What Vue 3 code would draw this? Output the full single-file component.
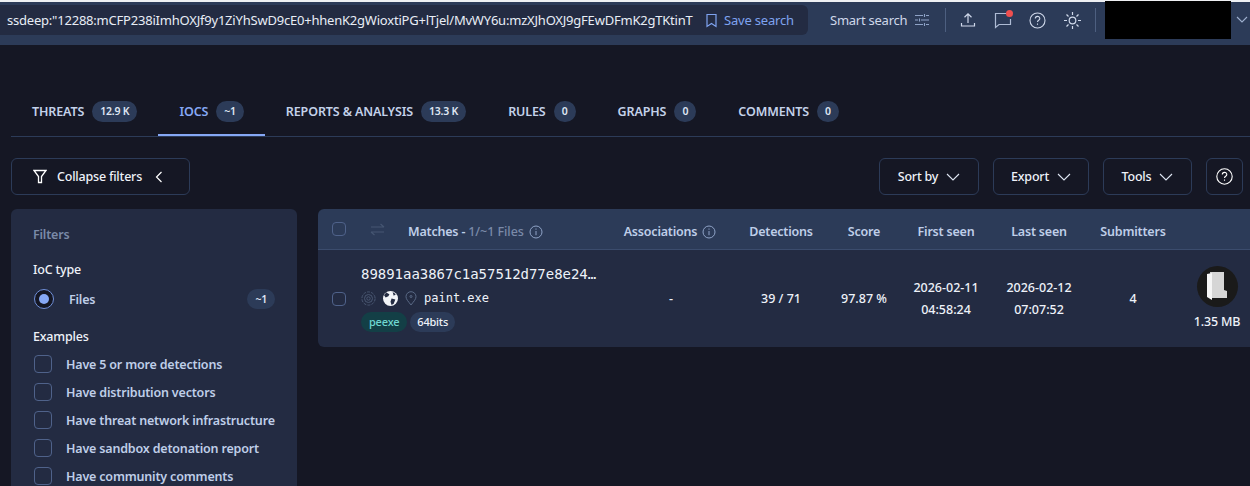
<script setup>
const tabs = [
  { label: 'THREATS', count: '12.9 K' },
  { label: 'IOCS', count: '~1', active: true },
  { label: 'REPORTS & ANALYSIS', count: '13.3 K' },
  { label: 'RULES', count: '0' },
  { label: 'GRAPHS', count: '0' },
  { label: 'COMMENTS', count: '0' },
]
const examples = [
  'Have 5 or more detections',
  'Have distribution vectors',
  'Have threat network infrastructure',
  'Have sandbox detonation report',
  'Have community comments',
]
const actions = ['Sort by', 'Export', 'Tools']
const columns = ['Detections', 'Score', 'First seen', 'Last seen', 'Submitters']
</script>

<template>
  <div class="page">
    <header class="topbar">
      <div class="search">
        <span class="query">ssdeep:"12288:mCFP238iImhOXJf9y1ZiYhSwD9cE0+hhenK2gWioxtiPG+lTjel/MvWY6u:mzXJhOXJ9gFEwDFmK2gTKtinT</span>
        <span class="save">
          <svg width="13" height="15" viewBox="0 0 13 15" fill="none" stroke="currentColor" stroke-width="1.2"><path d="M2 1.5h9v12l-4.5-3-4.5 3z"/></svg>
          Save search
        </span>
      </div>
      <span class="smart">Smart search
        <svg width="14" height="14" viewBox="0 0 14 14" stroke="#8fa3c7" stroke-width="1.1" fill="none"><path d="M0 2.5h8M11 2.5h3M9.5 1v3M0 7h3M6 7h8M4.500 5.500v3M0 11.500h8M11 11.500h3M9.500 10v3"/></svg>
      </span>
      <i class="sep first"></i>
      <svg class="upload" width="16" height="16" viewBox="0 0 16 16" fill="none" stroke="#cfd8ea" stroke-width="1.2"><path d="M8 11V2M4.500 5.200 8 1.800l3.500 3.400M1.500 11v3h13v-3"/></svg>
      <span class="chat">
        <svg width="19" height="18" viewBox="0 0 19 18" fill="none" stroke="#aebbd4" stroke-width="1.2"><path d="M12 2.500H1.500v14l3.500-3h11.500V8"/></svg>
        <b class="dot"></b>
      </span>
      <svg class="help-ic" width="17" height="17" viewBox="0 0 17 17" fill="none" stroke="#cfd8ea" stroke-width="1.1"><circle cx="8.500" cy="8.500" r="7.500"/><path d="M6.300 6.600c0-3 4.500-3 4.500-.1 0 1.800-2.300 1.800-2.300 3.600"/><path d="M8.500 11.500v1.300"/></svg>
      <svg class="sun" width="19" height="19" viewBox="0 0 19 19" fill="none" stroke="#cfd8ea" stroke-width="1.2"><circle cx="9.500" cy="9.500" r="3.300"/><path d="M9.500 1v3M9.500 15v3M1 9.500h3M15 9.500h3M3.500 3.500l2 2M13.500 13.500l2 2M3.500 15.500l2-2M13.500 5.500l2-2"/></svg>
      <i class="sep"></i>
      <div class="blackout"></div>
      <svg class="caret" width="12" height="8" viewBox="0 0 12 8" fill="none" stroke="#9fb0cf" stroke-width="1.100"><path d="m1 1 5 5 5-5"/></svg>
    </header>

    <nav class="tabs">
      <div v-for="t in tabs" :key="t.label" class="tab" :class="{ active: t.active }">
        <span>{{ t.label }}</span>
        <span class="count">{{ t.count }}</span>
      </div>
    </nav>

    <div class="toolbar">
      <button class="btn collapse">
        <svg width="14" height="15" viewBox="0 0 14 15" fill="none" stroke="#fff" stroke-width="1.300"><path d="M1 1.500h12L8.500 7.500v6h-3v-6z"/></svg>
        <span>Collapse filters</span>
        <svg class="chev" width="8" height="12" viewBox="0 0 8 12" fill="none" stroke="#fff" stroke-width="1.200"><path d="M6.500 1 1.500 6l5 5"/></svg>
      </button>
      <div class="actions">
        <button v-for="a in actions" :key="a" class="btn action">
          <span>{{ a }}</span>
          <svg width="14" height="8" viewBox="0 0 14 8" fill="none" stroke="#dfe6f3" stroke-width="1.100"><path d="m1 1 6 6 6-6"/></svg>
        </button>
        <button class="btn help">
          <svg width="17" height="17" viewBox="0 0 17 17" fill="none" stroke="#fff" stroke-width="1.100"><circle cx="8.500" cy="8.500" r="7.700"/><path d="M6.300 6.600c0-3 4.500-3 4.500-.1 0 1.800-2.300 1.800-2.300 3.600M8.500 11.500v1.300"/></svg>
        </button>
      </div>
    </div>

    <div class="content">
      <aside class="filters">
        <div class="f-title">Filters</div>
        <div class="f-head">IoC type</div>
        <div class="radio-row">
          <span class="radio"><span></span></span>
          <span class="radio-label">Files</span>
          <span class="count small">~1</span>
        </div>
        <div class="f-head examples">Examples</div>
        <label v-for="e in examples" :key="e" class="check-row">
          <span class="box"></span>
          <span>{{ e }}</span>
        </label>
      </aside>

      <section class="table">
        <div class="row head">
          <div class="first-cell">
            <span class="box tbox"></span>
            <svg class="swap" width="15" height="13" viewBox="0 0 15 13" fill="none" stroke="#465672" stroke-width="1.100"><path d="M1 4h13M10.500 1 14 4M14 9H1M4.500 12 1 9"/></svg>
            <span class="matches"><b>Matches - </b><em>1/~1 Files</em>
              <svg width="14" height="14" viewBox="0 0 14 14" fill="none" stroke="#8fa3c7" stroke-width="1"><circle cx="7" cy="7" r="6"/><path d="M7 6v4.200M7 3.500v1.200"/></svg>
            </span>
          </div>
          <span class="cell assoc">Associations
            <svg width="14" height="14" viewBox="0 0 14 14" fill="none" stroke="#8fa3c7" stroke-width="1"><circle cx="7" cy="7" r="6"/><path d="M7 6v4.200M7 3.500v1.200"/></svg>
          </span>
          <span v-for="c in columns" :key="c" class="cell">{{ c }}</span>
        </div>
        <div class="row body">
          <div class="first-cell">
            <span class="box tbox"></span>
            <div class="file">
              <div class="hash">89891aa3867c1a57512d77e8e24…</div>
              <div class="name-line">
                <svg width="15" height="15" viewBox="0 0 15 15" fill="none" stroke="#4a5873" stroke-width="1"><circle cx="7.500" cy="7.500" r="1.700"/><circle cx="7.500" cy="7.500" r="4"/><circle cx="7.500" cy="7.500" r="6.600" stroke-dasharray="3 1.200"/></svg>
                <svg width="15" height="15" viewBox="0 0 14 14"><circle cx="7" cy="7" r="7" fill="#f2f4f8"/><path d="M3 1.500 6 3 5 5 2.500 6 1 4zM8 7l3.500 1L10 12 8 13 7 10zM9 1l3 2-2 1.500z" fill="#232b42"/></svg>
                <svg width="12" height="15" viewBox="0 0 12 15" fill="none" stroke="#5a6a86" stroke-width="1"><path d="M6 14C3.500 10.500 1 8.500 1 5.700a5 5 0 0 1 10 0C11 8.500 8.500 10.500 6 14z"/><circle cx="6" cy="5.500" r="1"/></svg>
                <span class="exe">paint.exe</span>
              </div>
              <div class="chips"><span class="chip green">peexe</span><span class="chip blue">64bits</span></div>
            </div>
          </div>
          <span class="cell">-</span>
          <span class="cell">39 / 71</span>
          <span class="cell">97.87 %</span>
          <span class="cell dates">2026-02-11<br>04:58:24</span>
          <span class="cell dates">2026-02-12<br>07:07:52</span>
          <span class="cell">4</span>
          <div class="size">
            <span class="avatar">
              <svg width="20" height="29" viewBox="0 0 20 29"><path d="M3 0h14v18l3 1v7H5z" fill="#d6d6d6"/><path d="M0 2l5-1v27l-5-3z" fill="#f6f6f6"/></svg>
            </span>
            <span class="size-text">1.35 MB</span>
          </div>
        </div>
      </section>
    </div>
  </div>
</template>

<style>
html, body { margin: 0; background: #151724; overflow: hidden; }
</style>

<style scoped>
.page {
  width: 1250px; height: 486px; overflow: hidden; background: #151724;
  font-family: "Noto Sans", "Open Sans", sans-serif; color: #dfe6f3; font-size: 13px;
}
svg { display: block; flex: none; }
.topbar {
  height: 45px; box-sizing: border-box; border-top: 2px solid #eef0f3; padding-bottom: 7px; background: #2c3b58;
  display: flex; align-items: center; color: #cfd8ea;
}
.search {
  width: 808px; height: 30px; flex: none; background: #232b42; border-radius: 0 6px 6px 0;
  display: flex; align-items: center; box-sizing: border-box; padding-left: 7px; overflow: hidden;
}
.query { width: 686px; flex: none; white-space: nowrap; color: #e8edf6; font-size: 13px; letter-spacing: -0.21px; }
.save { display: flex; align-items: center; gap: 6px; margin-left: 12px; color: #7fa3f0; letter-spacing: -0.2px; white-space: nowrap; }
.smart { margin-left: 22px; display: flex; align-items: center; gap: 8px; letter-spacing: -0.25px; white-space: nowrap; width: 115px; flex: none; }
.sep { width: 1px; height: 24px; background: #4d5f80; flex: none; }
.sep.first { margin-right: 14px; }
.upload { margin-right: 18px; }
.chat { position: relative; display: block; margin-right: 16px; }
.dot { position: absolute; top: -1px; right: 0; width: 7px; height: 7px; border-radius: 50%; background: #f04f4f; }
.help-ic { margin-right: 17px; }
.sun { margin-right: 13px; }
.blackout { width: 126px; height: 38px; background: #000; margin-left: 9px; flex: none; }
.caret { margin-left: 5px; }
.tabs {
  margin: 47px 0 0 11px; height: 45px; box-sizing: border-box; border-bottom: 1px solid #2c3b58;
  display: flex; align-items: flex-start; padding-top: 9px; width: 1239px;
}
.tab { height: 35px; box-sizing: border-box; padding: 0 21px; display: flex; align-items: flex-start; gap: 8px; position: relative; font-weight: 600; font-size: 12.5px; color: #c4d2ea; letter-spacing: -0.13px; line-height: 21px; white-space: nowrap; }
.tab.active { color: #86a8f5; }
.tab.active::after { content: ""; position: absolute; left: 0; right: 0; bottom: 0; height: 2px; background: #86a8f5; }
.count { background: #2c3b58; border-radius: 11px; height: 21px; line-height: 21px; padding: 0 8px; font-size: 10.5px; font-weight: 600; color: #dfe6f3; letter-spacing: -0.2px; min-width: 6px; text-align: center; }
.toolbar { margin: 21px 7px 0 11px; display: flex; justify-content: space-between; }
.btn { height: 37px; box-sizing: border-box; background: transparent; border: 1px solid #2c3b58; border-radius: 6px; display: flex; align-items: center; justify-content: center; color: #eef2f9; font: 500 12.5px "Noto Sans", sans-serif; letter-spacing: -0.2px; padding: 0; }
.collapse { width: 179px; gap: 10px; justify-content: flex-start; padding-left: 21px; }
.chev { margin-left: 3px; }
.actions { display: flex; gap: 14px; }
.action { gap: 8px; }
.action:nth-child(1) { width: 100px; }
.action:nth-child(2) { width: 96px; }
.action:nth-child(3) { width: 89px; }
.help { width: 37px; }
.content { display: flex; margin: 14px 0 0 11px; gap: 21px; }
.filters { width: 286px; height: 300px; flex: none; box-sizing: border-box; padding: 16px 22px; background: #232b42; border-radius: 6px 6px 0 0; }
.f-title { color: #7a8aa8; font-weight: 600; font-size: 12.5px; line-height: 20px; letter-spacing: -0.2px; }
.f-head { color: #eef2f9; font-weight: 500; font-size: 12.5px; line-height: 20px; margin-top: 15px; letter-spacing: -0.2px; }
.f-head.examples { margin-top: 16px; }
.radio-row { display: flex; align-items: center; height: 24px; margin-top: 7px; font-weight: 600; color: #bfcee8; }
.radio { width: 20px; height: 20px; margin-left: 1px; box-sizing: border-box; border: 1px solid #6f8fd8; border-radius: 50%; background: #151724; display: flex; align-items: center; justify-content: center; }
.radio span { width: 10px; height: 10px; border-radius: 50%; background: #86a8f5; }
.radio-label { margin-left: 15px; font-size: 12.5px; letter-spacing: -0.2px; }
.count.small { margin-left: auto; height: 20px; line-height: 20px; }
.check-row { display: flex; align-items: center; gap: 14px; height: 28px; font-weight: 600; font-size: 12.5px; color: #bfcee8; letter-spacing: -0.18px; white-space: nowrap; }
.check-row:first-of-type { margin-top: 3px; }
.box { width: 18px; height: 18px; box-sizing: border-box; flex: none; margin-left: 1px; border: 1px solid #4f628a; border-radius: 4px; display: block; }
.table { width: 950px; flex: none; }
.row { display: grid; grid-template-columns: 290px 126px 94px 72px 92px 94px 94px 72px 16px; align-items: center; }
.head { height: 41px; box-sizing: border-box; background: #2c3b58; border-radius: 6px 0 0 0; border-bottom: 1px solid #3b4c6d; font-weight: 600; font-size: 12.5px; color: #bfcee8; letter-spacing: -0.2px; white-space: nowrap; }
.body { height: 97px; background: #232b42; border-radius: 0 0 0 6px; color: #eef2f9; font-size: 12.5px; font-weight: 500; }
.first-cell { display: flex; align-items: center; padding-left: 14px; }
.body .first-cell { align-self: stretch; }
.tbox { width: 14px; height: 14px; margin: 0; }
.swap { margin-left: 24px; }
.matches { margin-left: 23px; padding-top: 5px; display: flex; align-items: center; gap: 5px; }
.matches b { font-weight: 600; }
.matches em { font-style: normal; font-weight: 500; color: #7a8aa8; margin-left: -2px; letter-spacing: -0.05px; }
.cell { text-align: center; white-space: nowrap; }
.head .cell { padding-top: 5px; }
.assoc { display: flex; align-items: center; justify-content: center; gap: 5px; margin-left: -2px; }
.dates { line-height: 22px; }
.file { margin-left: 15px; align-self: flex-start; padding-top: 16px; min-width: 0; }
.hash { font-family: "DejaVu Sans Mono", monospace; font-size: 14px; line-height: 17px; white-space: nowrap; color: #eef2f9; font-weight: 400; letter-spacing: -0.03px; }
.name-line { display: flex; align-items: center; gap: 7px; margin-top: 7px; height: 16px; }
.exe { font-family: "DejaVu Sans Mono", monospace; font-size: 12px; font-weight: 400; }
.chips { display: flex; gap: 3px; margin-top: 6px; }
.chip { height: 20px; line-height: 20px; padding: 0 8px; border-radius: 10px; font-size: 11px; letter-spacing: -0.2px; }
.green { background: #133f46; color: #6fd6d0; }
.blue { background: #2c3b58; color: #eef2f9; padding: 0 7px; }
.size { display: flex; flex-direction: column; align-items: center; margin-left: 2px; }
.avatar { width: 41px; height: 41px; border-radius: 50%; background: #1a1a1a; display: flex; align-items: center; justify-content: center; }
.size-text { margin-top: 6px; line-height: 18px; letter-spacing: -0.2px; white-space: nowrap; }
</style>
